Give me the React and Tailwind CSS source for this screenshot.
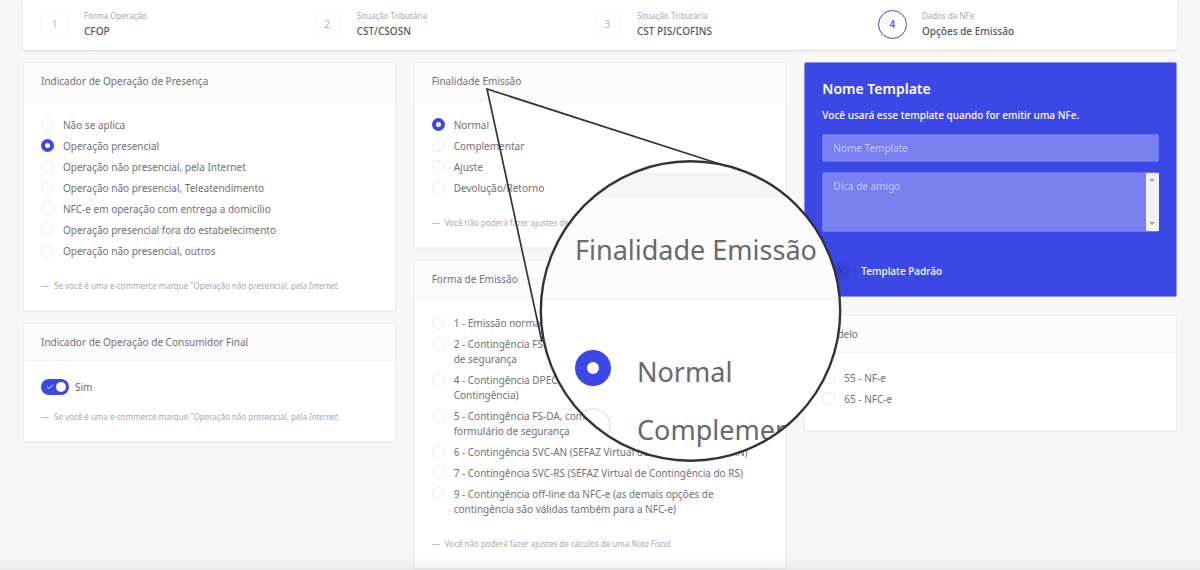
import React from 'react'
import { CheckIcon, XIcon } from 'lucide-react'

const steps = [
  { number: 1, label: 'Forma Operação', title: 'CFOP' },
  { number: 2, label: 'Situação Tributária', title: 'CST/CSOSN' },
  { number: 3, label: 'Situação Tributária', title: 'CST PIS/COFINS' },
  { number: 4, label: 'Dados da NFe', title: 'Opções de Emissão', active: true },
]

const presenca = [
  'Não se aplica',
  'Operação presencial',
  'Operação não presencial, pela Internet',
  'Operação não presencial, Teleatendimento',
  'NFC-e em operação com entrega a domicílio',
  'Operação presencial fora do estabelecimento',
  'Operação não presencial, outros',
]

const finalidade = ['Normal', 'Complementar', 'Ajuste', 'Devolução/Retorno']

const formaEmissao = [
  '1 - Emissão normal',
  '2 - Contingência FS-IA, com impressão em formulário de\u00a0segurança',
  '4 - Contingência DPEC (Declaração Prévia da Emissão em Contingência)',
  '5 - Contingência FS-DA, com impressão do DANFE em formulário\u00a0de\u00a0segurança',
  '6 - Contingência SVC-AN (SEFAZ Virtual de Contingência do AN)',
  '7 - Contingência SVC-RS (SEFAZ Virtual de Contingência do RS)',
  '9 - Contingência off-line da NFC-e (as demais opções de contingência são válidas também para a NFC-e)',
]

const modelo = ['55 - NF-e', '65 - NFC-e']

const Card = ({ title, children }) => (
  <section className="rounded-xs border border-[#f0f0f0] bg-white shadow-xs">
    <h2 className="flex h-[37px] items-center border-b border-[#f0f0f0] bg-[#fcfcfc] px-[17px] text-[10px] text-[#707076]">
      {title}
    </h2>
    <div className="px-[17px] pt-[18px] pb-4">{children}</div>
  </section>
)

const RadioList = ({ name, options, selected }) => (
  <ul className="space-y-[6px]">
    {options.map((option) => (
      <li key={option}>
        <label className="flex items-start gap-[9px] text-[10px] leading-[15px] text-[#707076]">
          <input
            type="radio"
            name={name}
            defaultChecked={option === selected}
            className="size-[13px] shrink-0 appearance-none rounded-full border border-[#e9e9e9] bg-white checked:border-4 checked:border-[#3b48e6]"
          />
          <span>{option}</span>
        </label>
      </li>
    ))}
  </ul>
)

const Note = ({ children }) => (
  <p className="flex gap-[5px] text-[8px] leading-4 text-[#a9a9a9]">
    <span>—</span>
    <span>{children}</span>
  </p>
)

const Magnifier = () => (
  <div className="pointer-events-none absolute top-0 left-0" aria-hidden="true">
    <div className="absolute top-[161px] left-[540px] size-[300px] overflow-hidden rounded-full bg-white text-[27px] leading-9 whitespace-nowrap text-[#68686f]">
      <div className="mt-3 h-6 border-t-2 border-b border-t-[#f2f2f2] border-b-[#ececec] bg-[#f6f6f6]" />
      <div className="flex h-[103px] items-center border-b border-[#ececec] bg-[#fcfcfc] pt-1 pl-[35px]">
        Finalidade Emissão
      </div>
      <div className="flex flex-col gap-[18px] pt-[50px] pl-[35px]">
        <div className="flex items-start gap-[26px]">
          <span className="size-9 shrink-0 rounded-full border-12 border-[#3b48e6]" />
          <span className="pt-1">Normal</span>
        </div>
        <div className="flex items-start gap-[26px]">
          <span className="size-9 shrink-0 rounded-full border-2 border-[#ebebeb]" />
          <span className="pt-1">Complementar</span>
        </div>
      </div>
    </div>
    <svg className="absolute top-0 left-0" width="860" height="480" fill="none" stroke="#333333">
      <circle cx="690.5" cy="311" r="149.7" strokeWidth="2.4" />
      <path d="M726 166 L487 89 L542 342" strokeWidth="1.7" />
    </svg>
  </div>
)

const App = () => {
  return (
    <div className="relative min-h-screen overflow-hidden bg-[#f7f7f7] px-[23px] font-['Noto_Sans','Open_Sans',sans-serif]">
      <nav className="flex h-[50px] justify-between rounded-b-xs bg-white pr-[163px] pl-[17px] shadow-sm">
        {steps.map((step) => (
          <a key={step.number} href="#" className="flex h-12 items-center gap-[15px]">
            <span
              className={
                step.active
                  ? 'flex size-[29px] items-center justify-center rounded-full border border-[#3b48e6] text-[10px] font-semibold text-[#5560e9]'
                  : 'flex size-[29px] items-center justify-center rounded-full border border-[#f0f0f0] text-[10px] text-[#b5b5b5]'
              }
            >
              {step.number}
            </span>
            <span className="flex flex-col">
              <span className="text-[8px] leading-[14px] text-[#a9a9a9]">{step.label}</span>
              <span className="text-[10px] leading-4 font-medium text-[#55555a]">{step.title}</span>
            </span>
          </a>
        ))}
      </nav>

      <main className="grid grid-cols-3 items-start gap-[18px] pt-3">
        <div className="flex flex-col gap-3">
          <Card title="Indicador de Operação de Presença">
            <div className="flex flex-col gap-[19px]">
              <RadioList name="presenca" options={presenca} selected="Operação presencial" />
              <Note>
                Se você é uma e-commerce marque "Operação não presencial, pela <em>Internet.</em>
              </Note>
            </div>
          </Card>
          <Card title="Indicador de Operação de Consumidor Final">
            <div className="flex flex-col gap-[14px]">
              <label className="flex items-center gap-[6px] text-[10px] leading-4 text-[#707076]">
                <span className="relative flex">
                  <input
                    type="checkbox"
                    defaultChecked
                    className="h-4 w-7 appearance-none rounded-full bg-[#3b48e6]"
                  />
                  <CheckIcon className="absolute top-1 left-[5px] size-2 text-white" strokeWidth={3} />
                  <span className="absolute top-[3px] right-[3px] size-[10px] rounded-full bg-white" />
                </span>
                Sim
              </label>
              <Note>
                Se você é uma e-commerce marque "Operação não presencial, pela <em>Internet.</em>
              </Note>
            </div>
          </Card>
        </div>

        <div className="flex flex-col gap-3">
          <Card title="Finalidade Emissão">
            <div className="flex flex-col gap-[19px]">
              <RadioList name="finalidade" options={finalidade} selected="Normal" />
              <Note>
                Você não poderá fazer ajustes de cáculos de uma <em>Nota Fiscal.</em>
              </Note>
            </div>
          </Card>
          <Card title="Forma de Emissão">
            <div className="flex flex-col gap-[19px]">
              <RadioList name="forma" options={formaEmissao} />
              <Note>
                Você não poderá fazer ajustes de cáculos de uma <em>Nota Fiscal.</em>
              </Note>
            </div>
          </Card>
        </div>

        <div className="flex flex-col gap-[18px]">
          <section className="rounded-xs border border-[#8c94f0] bg-[#3b48e6] px-[17px] pt-[14px] pb-[17px] text-white">
            <h2 className="text-[14px] leading-6 font-semibold">Nome Template</h2>
            <p className="mt-1 text-[10px] leading-5 font-medium">
              Você usará esse template quando for emitir uma NFe.
            </p>
            <input
              type="text"
              aria-label="Nome Template"
              placeholder="Nome Template"
              className="mt-[9px] block h-7 w-full rounded-xs border border-[#6a74ec] bg-[#7780ee] px-[10px] text-[10px] placeholder:text-[#c3c7f8]"
            />
            <div className="relative mt-[10px]">
              <textarea
                aria-label="Dica de amigo"
                placeholder="Dica de amigo"
                className="block h-[60px] w-full resize-none overflow-hidden rounded-xs border border-[#6a74ec] bg-[#7780ee] px-[10px] py-[5px] text-[10px] leading-4 placeholder:text-[#c3c7f8]"
              />
              <div className="absolute inset-y-px right-0 flex w-[13px] flex-col items-center justify-between bg-[#f1f1f1] py-[5px]">
                <svg width="6" height="4" viewBox="0 0 6 4" fill="#a3a3a3">
                  <path d="M3 0 L6 3 H0 Z" />
                </svg>
                <svg width="6" height="4" viewBox="0 0 6 4" fill="#a3a3a3">
                  <path d="M0 0 H6 L3 3 Z" />
                </svg>
              </div>
            </div>
            <label className="mt-[31px] flex items-center gap-[11px] text-[10px] leading-4 font-medium">
              <span className="relative flex">
                <input type="checkbox" className="h-4 w-7 appearance-none rounded-full bg-[#3641cd]" />
                <span className="absolute top-[3px] left-[3px] size-[10px] rounded-full bg-[#3b48e6]" />
                <XIcon className="absolute top-1 right-[5px] size-2 text-[#2a33a6]" strokeWidth={3} />
              </span>
              Template Padrão
            </label>
          </section>
          <Card title="Modelo">
            <div className="pb-[7px]">
              <RadioList name="modelo" options={modelo} />
            </div>
          </Card>
        </div>
      </main>

      <div className="pointer-events-none absolute inset-x-0 bottom-0 h-4 bg-linear-to-b from-transparent to-black/5" />
      <Magnifier />
    </div>
  )
}

export default App
